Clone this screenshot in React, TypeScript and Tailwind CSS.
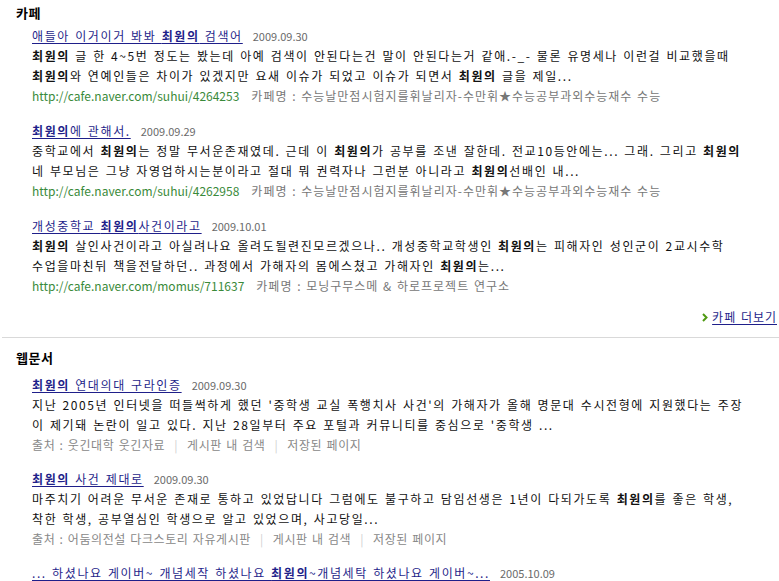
import React from "react";

const B = ({ children }: { children: React.ReactNode }) => (
  <b className="font-bold">{children}</b>
);

const Title = ({ children, date }: { children: React.ReactNode; date: string }) => (
  <div className="flex items-baseline h-[20px] leading-[20px] whitespace-nowrap">
    <a className="text-[#1f1f8a] underline underline-offset-2 cursor-pointer">{children}</a>
    <span className="ml-[10px] text-[11px] tracking-normal [word-spacing:0px] text-[#6a6a6a]">{date}</span>
  </div>
);

const Line = ({ children }: { children: React.ReactNode }) => (
  <div className="h-[20px] leading-[20px] whitespace-nowrap text-[#111]">{children}</div>
);

const CafeMeta = ({ url, name }: { url: string; name: string }) => (
  <div className="h-[20px] leading-[20px] whitespace-nowrap flex">
    <span className="text-[#3a8a3a] tracking-normal [word-spacing:0px]">{url}</span>
    <span className="ml-[12px] text-[#777] tracking-[1px]">카페명 : {name}</span>
  </div>
);

const Source = ({ name }: { name: string }) => (
  <div className="h-[20px] leading-[20px] whitespace-nowrap text-[#888] tracking-[0.6px]">
    출처 : {name}
    <span className="mx-[9px] text-[#d0d0d0]">|</span>
    게시판 내 검색
    <span className="mx-[9px] text-[#d0d0d0]">|</span>
    저장된 페이지
  </div>
);

export default function App() {
  return (
    <div className="w-[779px] h-[581px] overflow-hidden bg-white text-[12px] tracking-[1.6px] [word-spacing:1px] font-['Noto_Sans_CJK_KR','Noto_Sans',sans-serif]">
      {/* 카페 */}
      <div className="pt-[2px]">
        <div className="pl-[16px] h-[24px] leading-[22px] text-[13px] font-bold text-black tracking-[0.5px]">카페</div>
        <div className="pl-[32px] flex flex-col gap-[15px]">
          <div>
            <Title date="2009.09.30">
              애들아 이거이거 봐봐 <B>최원의</B> 검색어
            </Title>
            <Line>
              <B>최원의</B> 글 한 4~5번 정도는 봤는데 아예 검색이 안된다는건 말이 안된다는거 같애.-_- 물론 유명세나 이런걸 비교했을때
            </Line>
            <Line>
              <B>최원의</B>와 연예인들은 차이가 있겠지만 요새 이슈가 되었고 이슈가 되면서 <B>최원의</B> 글을 제일...
            </Line>
            <CafeMeta url="http://cafe.naver.com/suhui/4264253" name="수능날만점시험지를휘날리자-수만휘★수능공부과외수능재수 수능" />
          </div>
          <div>
            <Title date="2009.09.29">
              <B>최원의</B>에 관해서.
            </Title>
            <Line>
              중학교에서 <B>최원의</B>는 정말 무서운존재였데. 근데 이 <B>최원의</B>가 공부를 조낸 잘한데. 전교10등안에는... 그래. 그리고 <B>최원의</B>
            </Line>
            <Line>
              네 부모님은 그냥 자영업하시는분이라고 절대 뭐 권력자나 그런분 아니라고 <B>최원의</B>선배인 내...
            </Line>
            <CafeMeta url="http://cafe.naver.com/suhui/4262958" name="수능날만점시험지를휘날리자-수만휘★수능공부과외수능재수 수능" />
          </div>
          <div>
            <Title date="2009.10.01">
              개성중학교 <B>최원의</B>사건이라고
            </Title>
            <Line>
              <B>최원의</B> 살인사건이라고 아실려나요 올려도될련진모르겠으나.. 개성중학교학생인 <B>최원의</B>는 피해자인 성인군이 2교시수학
            </Line>
            <Line>
              수업을마친뒤 책을전달하던.. 과정에서 가해자의 몸에스쳤고 가해자인 <B>최원의</B>는...
            </Line>
            <CafeMeta url="http://cafe.naver.com/momus/711637" name="모닝구무스메 & 하로프로젝트 연구소" />
          </div>
        </div>
        <div className="mt-[11px] h-[20px] leading-[20px] flex justify-end items-center pr-[2px]">
          <svg width="6" height="9" viewBox="0 0 6 9" className="mr-[4px]">
            <path d="M1 1 L4.5 4.5 L1 8" stroke="#4f9a12" strokeWidth="2" fill="none" />
          </svg>
          <a className="text-[#1f1f8a] underline underline-offset-2 tracking-[1px]">카페 더보기</a>
        </div>
      </div>

      <div className="mt-[10px] ml-[2px] h-[1px] bg-[#d9d9d9]" />

      {/* 웹문서 */}
      <div className="pt-[9px]">
        <div className="pl-[16px] h-[22px] leading-[22px] text-[13px] font-bold text-black tracking-[0.5px]">웹문서</div>
        <div className="pl-[32px] mt-[6px] flex flex-col gap-[14px]">
          <div>
            <Title date="2009.09.30">
              <B>최원의</B> 연대의대 구라인증
            </Title>
            <Line>
              지난 2005년 인터넷을 떠들썩하게 했던 '중학생 교실 폭행치사 사건'의 가해자가 올해 명문대 수시전형에 지원했다는 주장
            </Line>
            <Line>
              이 제기돼 논란이 일고 있다. 지난 28일부터 주요 포털과 커뮤니티를 중심으로 '중학생 ...
            </Line>
            <Source name="웃긴대학 웃긴자료" />
          </div>
          <div>
            <Title date="2009.09.30">
              <B>최원의</B> 사건 제대로
            </Title>
            <Line>
              마주치기 어려운 무서운 존재로 통하고 있었답니다 그럼에도 불구하고 담임선생은 1년이 다되가도록 <B>최원의</B>를 좋은 학생,
            </Line>
            <Line>
              착한 학생, 공부열심인 학생으로 알고 있었으며, 사고당일...
            </Line>
            <Source name="어둠의전설 다크스토리 자유게시판" />
          </div>
          <div>
            <Title date="2005.10.09">
              ... 하셨나요 게이버~ 개념세작 하셨나요 <B>최원의</B>~개념세탁 하셨나요 게이버~...
            </Title>
          </div>
        </div>
      </div>
    </div>
  );
}
